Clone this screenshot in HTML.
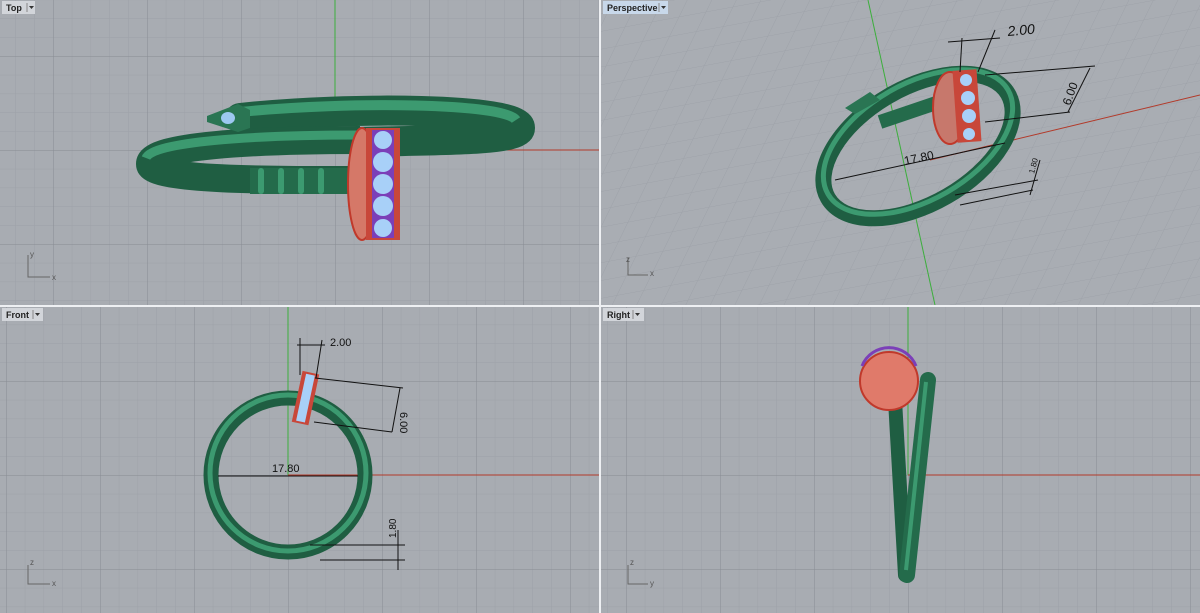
<!DOCTYPE html>
<html><head><meta charset="utf-8"><style>
html,body{margin:0;padding:0;background:#fff;}
svg{display:block;font-family:"Liberation Sans",sans-serif;}
</style></head><body>
<svg width="1200" height="613" viewBox="0 0 1200 613" xmlns="http://www.w3.org/2000/svg">
<defs>
<pattern id="gTop" x="335" y="150" width="18.8" height="18.8" patternUnits="userSpaceOnUse"><path d="M0 0H18.8M0 0V18.8" stroke="#9da1a8" stroke-width="1" fill="none"/></pattern>
<pattern id="GTop" x="335" y="150" width="94" height="94" patternUnits="userSpaceOnUse"><path d="M0 0H94M0 0V94" stroke="#888c93" stroke-width="1" fill="none"/></pattern>
<pattern id="gF" x="288" y="475" width="18.8" height="18.8" patternUnits="userSpaceOnUse"><path d="M0 0H18.8M0 0V18.8" stroke="#9da1a8" stroke-width="1" fill="none"/></pattern>
<pattern id="GF" x="288" y="475" width="94" height="94" patternUnits="userSpaceOnUse"><path d="M0 0H94M0 0V94" stroke="#888c93" stroke-width="1" fill="none"/></pattern>
<pattern id="gR" x="908" y="475" width="18.8" height="18.8" patternUnits="userSpaceOnUse"><path d="M0 0H18.8M0 0V18.8" stroke="#9da1a8" stroke-width="1" fill="none"/></pattern>
<pattern id="GR" x="908" y="475" width="94" height="94" patternUnits="userSpaceOnUse"><path d="M0 0H94M0 0V94" stroke="#888c93" stroke-width="1" fill="none"/></pattern>
<pattern id="gP" x="0" y="0" width="24" height="20" patternUnits="userSpaceOnUse" patternTransform="skewX(-35) rotate(-12)"><path d="M0 0H24M0 0V20" stroke="#9da1a8" stroke-width="1" fill="none"/></pattern>
<clipPath id="c1"><rect x="0" y="0" width="599" height="305"/></clipPath>
<clipPath id="c2"><rect x="601" y="0" width="599" height="305"/></clipPath>
<clipPath id="c3"><rect x="0" y="307" width="599" height="306"/></clipPath>
<clipPath id="c4"><rect x="601" y="307" width="599" height="306"/></clipPath>
</defs>
<rect width="1200" height="613" fill="#eef0f3"/>
<!-- TOP -->
<g clip-path="url(#c1)">
<rect x="0" y="0" width="599" height="305" fill="#a8acb2"/>
<rect x="0" y="0" width="599" height="305" fill="url(#gTop)"/>
<rect x="0" y="0" width="599" height="305" fill="url(#GTop)"/>
<line x1="335" y1="0" x2="335" y2="150" stroke="#3cae3c"/>
<line x1="335" y1="150" x2="599" y2="150" stroke="#b23a2a"/>
<path d="M240 118 C350 106 520 108 520 128 C520 142 420 140 360 142" fill="none" stroke="#1f5e42" stroke-width="30" stroke-linecap="round"/>
<path d="M240 112 C350 101 505 103 516 120" fill="none" stroke="#3c9a70" stroke-width="10"/>
<path d="M360 140 C250 140 150 146 150 164 C150 182 300 180 360 180" fill="none" stroke="#1f5e42" stroke-width="28"/>
<path d="M360 135 C250 135 152 142 146 158" fill="none" stroke="#3c9a70" stroke-width="9"/>
<rect x="250" y="168" width="110" height="26" fill="#246b4b"/>
<g fill="#3c9a70"><rect x="258" y="168" width="6" height="26" rx="3"/><rect x="278" y="168" width="6" height="26" rx="3"/><rect x="298" y="168" width="6" height="26" rx="3"/><rect x="318" y="168" width="6" height="26" rx="3"/></g>
<path d="M207 116 L238 104 L250 110 L250 128 L238 132 L207 122Z" fill="#2a7553"/>
<ellipse cx="228" cy="118" rx="7" ry="6" fill="#9dc8f0"/>
<ellipse cx="362" cy="184" rx="14" ry="56" fill="#d57868" stroke="#c0392b" stroke-width="2"/>
<rect x="366" y="128" width="34" height="112" fill="#c8473a"/>
<rect x="372" y="130" width="22" height="108" fill="#7b3fb8"/>
<g fill="#a8d0f8"><circle cx="383" cy="140" r="9"/><circle cx="383" cy="162" r="10"/><circle cx="383" cy="184" r="10"/><circle cx="383" cy="206" r="10"/><circle cx="383" cy="228" r="9"/></g>
<path d="M28 255 V277 H50" fill="none" stroke="#666" stroke-width="1"/>
<text x="30" y="257" font-size="8" fill="#555">y</text><text x="52" y="280" font-size="8" fill="#555">x</text>
</g>
<!-- PERSPECTIVE -->
<g clip-path="url(#c2)">
<rect x="601" y="0" width="599" height="305" fill="#a9adb3"/>
<rect x="601" y="0" width="599" height="305" fill="url(#gP)"/>
<line x1="868" y1="0" x2="935" y2="305" stroke="#3cae3c"/>
<line x1="930" y1="160" x2="1200" y2="95" stroke="#b23a2a"/>
<ellipse cx="918" cy="146" rx="104" ry="58" transform="rotate(-30 918 146)" fill="none" stroke="#1f5e42" stroke-width="16"/>
<ellipse cx="918" cy="142" rx="104" ry="58" transform="rotate(-30 918 142)" fill="none" stroke="#3c9a70" stroke-width="5"/>
<path d="M880 122 L945 100" stroke="#246b4b" stroke-width="14"/>
<path d="M845 108 L870 92 L880 100 L855 114Z" fill="#2a7553"/>
<ellipse cx="950" cy="108" rx="17" ry="36" fill="#c7786c" stroke="#c0392b" stroke-width="2"/>
<rect x="955" y="70" width="24" height="72" fill="#c8473a" transform="rotate(-4 967 106)"/>
<g fill="#a8d0f8"><circle cx="966" cy="80" r="6"/><circle cx="968" cy="98" r="7"/><circle cx="969" cy="116" r="7"/><circle cx="969" cy="134" r="6"/></g>
<g stroke="#111" stroke-width="1" fill="none">
<line x1="948" y1="42" x2="1000" y2="38"/><line x1="960" y1="72" x2="962" y2="38"/><line x1="978" y1="72" x2="995" y2="30"/>
<line x1="985" y1="75" x2="1095" y2="66"/><line x1="985" y1="122" x2="1070" y2="112"/><line x1="1090" y1="68" x2="1068" y2="112"/>
<line x1="835" y1="180" x2="1005" y2="143"/>
<line x1="955" y1="195" x2="1038" y2="180"/><line x1="960" y1="205" x2="1033" y2="190"/><line x1="1040" y1="160" x2="1030" y2="195"/>
</g>
<text x="1008" y="36" font-size="14" font-style="italic" fill="#111" transform="rotate(-5 1008 36)">2.00</text>
<text x="1070" y="106" font-size="12" fill="#111" transform="rotate(-70 1070 106)">6.00</text>
<text x="905" y="165" font-size="12" fill="#111" transform="rotate(-12 905 165)">17.80</text>
<text x="1034" y="174" font-size="8" fill="#111" transform="rotate(-75 1034 174)">1.80</text>
<path d="M628 258 V275 H648" fill="none" stroke="#666"/>
<text x="626" y="262" font-size="8" fill="#555">z</text><text x="650" y="276" font-size="8" fill="#555">x</text>
</g>
<!-- FRONT -->
<g clip-path="url(#c3)">
<rect x="0" y="307" width="599" height="306" fill="#a8acb2"/>
<rect x="0" y="307" width="599" height="306" fill="url(#gF)"/>
<rect x="0" y="307" width="599" height="306" fill="url(#GF)"/>
<line x1="288" y1="307" x2="288" y2="475" stroke="#3cae3c"/>
<line x1="288" y1="475" x2="599" y2="475" stroke="#b23a2a"/>
<circle cx="288" cy="475" r="77" fill="none" stroke="#1f5e42" stroke-width="15"/>
<circle cx="288" cy="473" r="78" fill="none" stroke="#3c9a70" stroke-width="5"/>
<g transform="rotate(12 305 398)"><rect x="297" y="372" width="17" height="52" fill="#c8473a"/><rect x="301" y="374" width="9" height="48" fill="#a8d0f8"/></g>
<g stroke="#111" stroke-width="1" fill="none">
<line x1="300" y1="338" x2="300" y2="375"/><line x1="322" y1="340" x2="316" y2="378"/><line x1="297" y1="345" x2="325" y2="345"/>
<line x1="315" y1="378" x2="403" y2="388"/><line x1="314" y1="422" x2="392" y2="432"/><line x1="400" y1="388" x2="392" y2="432"/>
<line x1="218" y1="476" x2="358" y2="476"/>
<line x1="310" y1="545" x2="405" y2="545"/><line x1="320" y1="560" x2="405" y2="560"/><line x1="398" y1="530" x2="398" y2="570"/>
</g>
<text x="330" y="346" font-size="11" fill="#111">2.00</text>
<text x="400" y="412" font-size="11" fill="#111" transform="rotate(90 400 412)">6.00</text>
<text x="272" y="472" font-size="11" fill="#111">17.80</text>
<text x="396" y="538" font-size="10" fill="#111" transform="rotate(-90 396 538)">1.80</text>
<path d="M28 565 V584 H50" fill="none" stroke="#666"/>
<text x="30" y="565" font-size="8" fill="#555">z</text><text x="52" y="586" font-size="8" fill="#555">x</text>
</g>
<!-- RIGHT -->
<g clip-path="url(#c4)">
<rect x="601" y="307" width="599" height="306" fill="#a8acb2"/>
<rect x="601" y="307" width="599" height="306" fill="url(#gR)"/>
<rect x="601" y="307" width="599" height="306" fill="url(#GR)"/>
<line x1="908" y1="307" x2="908" y2="475" stroke="#3cae3c"/>
<line x1="908" y1="475" x2="1200" y2="475" stroke="#b23a2a"/>
<path d="M895 400 L905 575" stroke="#1f5e42" stroke-width="14" stroke-linecap="round"/>
<path d="M928 380 L907 575" stroke="#246b4b" stroke-width="16" stroke-linecap="round"/>
<path d="M926 382 L906 570" stroke="#3c9a70" stroke-width="4"/>
<circle cx="889" cy="381" r="29" fill="#e07a6a" stroke="#c0392b" stroke-width="2"/>
<path d="M862 366 A29 29 0 0 1 916 366" fill="none" stroke="#7b3fb8" stroke-width="3"/>
<path d="M628 565 V584 H648" fill="none" stroke="#666"/>
<text x="630" y="565" font-size="8" fill="#555">z</text><text x="650" y="586" font-size="8" fill="#555">y</text>
</g>
<rect x="599" y="0" width="2" height="613" fill="#eef0f3"/>
<rect x="0" y="305" width="1200" height="2" fill="#eef0f3"/>
<g font-size="9" font-weight="bold" fill="#222">
<rect x="2" y="1" width="33" height="13" fill="#d2d5da"/><text x="6" y="11">Top</text><line x1="27" y1="3" x2="27" y2="12" stroke="#888"/><path d="M29 6 h5 l-2.5 3z" fill="#333"/>
<rect x="603" y="1" width="65" height="13" fill="#c8d8ea"/><text x="607" y="11">Perspective</text><line x1="659" y1="3" x2="659" y2="12" stroke="#888"/><path d="M661 6 h5 l-2.5 3z" fill="#333"/>
<rect x="2" y="308" width="41" height="13" fill="#d2d5da"/><text x="6" y="318">Front</text><line x1="33" y1="310" x2="33" y2="319" stroke="#888"/><path d="M35 313 h5 l-2.5 3z" fill="#333"/>
<rect x="603" y="308" width="41" height="13" fill="#d2d5da"/><text x="607" y="318">Right</text><line x1="633" y1="310" x2="633" y2="319" stroke="#888"/><path d="M635 313 h5 l-2.5 3z" fill="#333"/>
</g>
</svg>
</body></html>
